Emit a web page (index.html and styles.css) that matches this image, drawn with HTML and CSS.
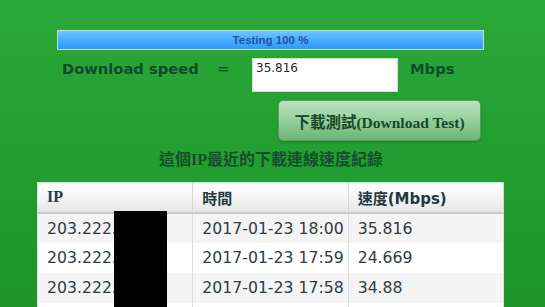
FILE: index.html
```html
<!DOCTYPE html>
<html lang="zh-Hant">
<head>
<meta charset="utf-8">
<title>下載測試</title>
<link rel="stylesheet" href="styles.css">
</head>
<body>
<div class="page">
  <div class="progress"><div class="progress-fill">Testing 100 %</div></div>
  <div class="speed-row">
    <div class="speed-label">Download speed</div>
    <div class="speed-eq">=</div>
    <div class="speed-box">35.816</div>
    <div class="speed-unit">Mbps</div>
  </div>
  <div class="btn-row">
    <button class="test-btn">下載測試(Download Test)</button>
  </div>
  <h2 class="history-title">這個IP最近的下載連線速度紀錄</h2>
  <div class="table-wrap">
    <table class="history">
      <thead>
        <tr><th class="th-ip">IP</th><th>時間</th><th>速度<span class="latin">(Mbps)</span></th></tr>
      </thead>
      <tbody>
        <tr><td>203.222.</td><td>2017-01-23 18:00</td><td>35.816</td></tr>
        <tr><td>203.222.</td><td>2017-01-23 17:59</td><td>24.669</td></tr>
        <tr><td>203.222.</td><td>2017-01-23 17:58</td><td>34.88</td></tr>
        <tr><td>&nbsp;</td><td>&nbsp;</td><td>&nbsp;</td></tr>
      </tbody>
    </table>
    <div class="redact"></div>
  </div>
</div>
</body>
</html>
```

FILE: styles.css
```css
html, body {
  margin: 0;
  padding: 0;
  height: 307px;
  overflow: hidden;
}
body {
  background: linear-gradient(to bottom, #2aa838 0%, #1c9429 100%);
  font-family: "DejaVu Sans", Verdana, sans-serif;
}
.page {
  width: 542px;
  padding-top: 30px;
}
.progress {
  margin-left: 57px;
  width: 427px;
  height: 20px;
  box-sizing: border-box;
  border: 1px solid #b6e4c8;
  background: #3aa0ff;
}
.progress-fill {
  height: 18px;
  background: linear-gradient(to bottom, #74c4ff 0%, #48adff 50%, #2f98fb 100%);
  font-family: "Liberation Sans", Arial, sans-serif;
  font-weight: bold;
  font-size: 11.5px;
  line-height: 18px;
  color: #1d55a2;
  text-align: center;
}
.speed-row {
  display: flex;
  align-items: flex-start;
  margin-top: 8px;
  height: 34px;
}
.speed-label, .speed-eq, .speed-unit {
  font-family: "DejaVu Sans", Verdana, sans-serif;
  font-weight: bold;
  font-size: 14.7px;
  line-height: 20px;
  color: #0e4b2b;
  margin-top: 1px;
}
.speed-label {
  margin-left: 62px;
  width: 155px;
}
.speed-eq {
  width: 35px;
  font-weight: normal;
}
.speed-box {
  width: 146px;
  height: 34px;
  box-sizing: border-box;
  background: #fff;
  border: 1px solid #d6dcd6;
  padding: 2px 3px;
  font-family: "DejaVu Sans", Verdana, sans-serif;
  font-size: 12px;
  line-height: 15px;
  color: #2a2a2a;
}
.speed-unit {
  margin-left: 12px;
}
.btn-row {
  margin-top: 8px;
  padding-left: 278px;
}
.test-btn {
  width: 203px;
  height: 41px;
  border: 1px solid #5d9f66;
  border-radius: 5px;
  background: linear-gradient(to bottom, #bde3c1 0%, #96cf9d 50%, #6cb476 100%);
  box-shadow: 0 1px 2px rgba(0, 60, 0, 0.35);
  font-family: "Liberation Serif", "Noto Sans CJK TC", serif;
  font-weight: bold;
  font-size: 15.5px;
  color: #17482a;
  padding: 0;
  margin: 0;
}
.history-title {
  margin: 9px 0 0;
  text-align: center;
  font-family: "Liberation Serif", "Noto Sans CJK TC", serif;
  font-weight: bold;
  font-size: 16px;
  line-height: 20px;
  color: #14502c;
}
.table-wrap {
  position: relative;
  margin: 12px 0 0 37px;
  width: 467px;
}
.history {
  width: 467px;
  border-collapse: collapse;
  table-layout: fixed;
  border: 1px solid #d5e6d7;
  background: #fff;
}
.history th, .history td {
  height: 30px;
  padding: 0 0 0 9px;
  text-align: left;
  white-space: nowrap;
  overflow: hidden;
  box-sizing: border-box;
}
.history th {
  background: linear-gradient(to bottom, #ffffff 0%, #f2f2f2 60%, #e4e4e4 100%);
  border-right: 1px solid #d6d6d6;
  border-bottom: 2px solid #c9c9c9;
  font-family: "Noto Sans CJK TC", sans-serif;
  font-size: 15px;
  font-weight: bold;
  color: #213c45;
  height: 30px;
}
.history th .latin {
  font-family: "DejaVu Sans", sans-serif;
}
.history th.th-ip {
  font-family: "Liberation Serif", serif;
  font-size: 16px;
}
.history td {
  border-right: 1px solid #dcdcdc;
  font-family: "DejaVu Sans", Verdana, sans-serif;
  font-size: 15.7px;
  color: #2e3c42;
}
.history tbody tr:nth-child(odd) td {
  background: #f4f4f4;
}
.history tbody tr:nth-child(even) td {
  background: #ffffff;
}
.redact {
  position: absolute;
  left: 77px;
  top: 29px;
  width: 53px;
  height: 110px;
  background: #000;
}
```
